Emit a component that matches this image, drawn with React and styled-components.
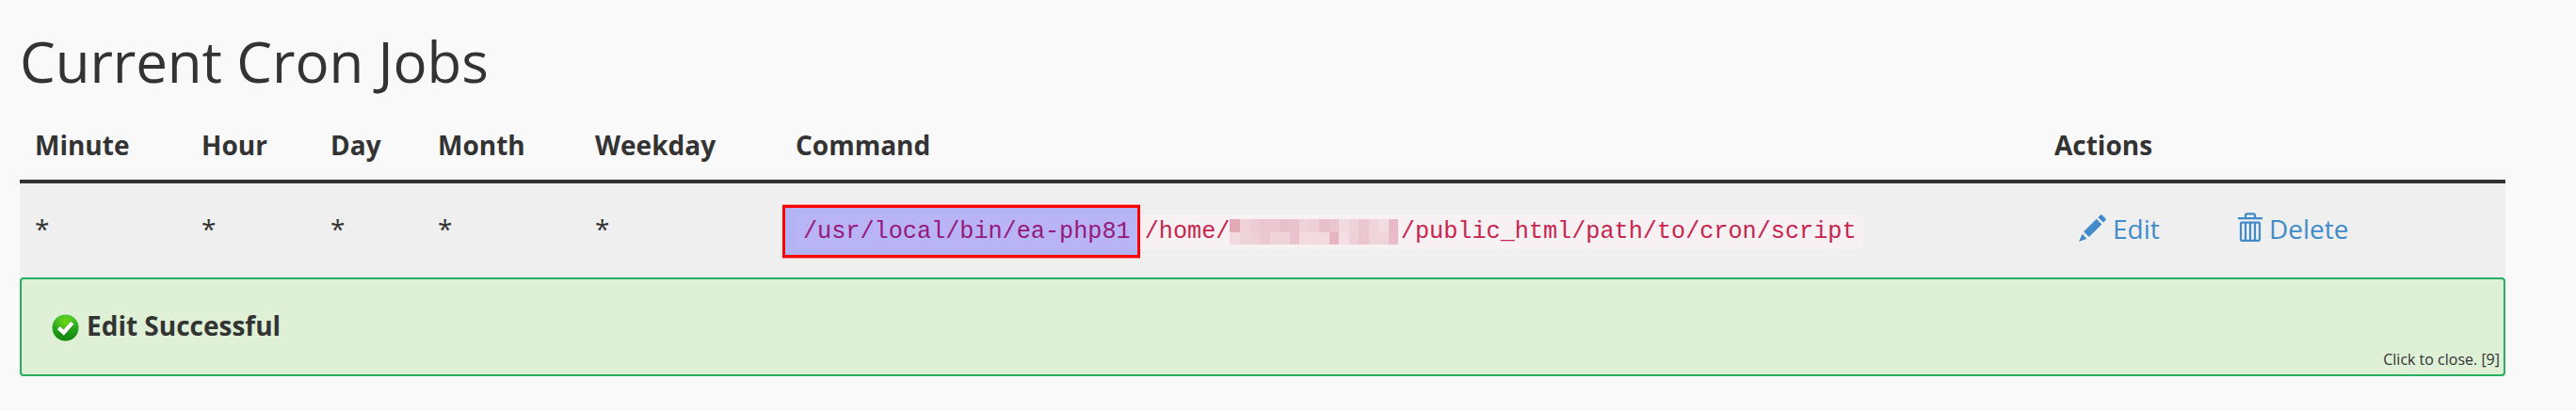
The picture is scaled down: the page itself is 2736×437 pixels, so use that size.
import React from "react";
import styled, { createGlobalStyle } from "styled-components";

const GlobalStyle = createGlobalStyle`
  body { margin: 0; background: #f9f9f9; }
  *, *::before, *::after { box-sizing: border-box; }
`;

const Page = styled.main`
  height: 437px;
  padding: 32px 75px 0 21px;
  background: #f9f9f9;
  color: #333;
  font: 28px/40px "Open Sans", sans-serif;
`;

const Title = styled.h2`
  margin: 0;
  font-size: 60px;
  line-height: 66px;
  font-weight: 400;
  letter-spacing: -0.1px;
`;

const columns = "177px 137px 114px 167px 213px 1337px 1fr";

const HeaderRow = styled.div`
  display: grid;
  grid-template-columns: ${columns};
  height: 97px;
  padding: 36px 0 0 16px;
  border-bottom: 4px solid #333;
  font-weight: 700;
`;

const JobRow = styled.div`
  display: grid;
  grid-template-columns: ${columns};
  height: 100px;
  padding: 28px 0 0 16px;
  background: #efefef;
`;

const Command = styled.div`
  position: relative;
  display: flex;
  align-items: flex-start;
  padding: 5px 0 0 0;
`;

const Code = styled.code`
  display: flex;
  align-items: center;
  height: 37px;
  padding: 0 8px;
  border-radius: 8px;
  background: #f7f1f3;
  color: #c7254e;
  font: 25.2px/29px "Liberation Mono", monospace;
  white-space: pre;
`;

const Highlight = styled.span`
  position: absolute;
  left: -14px;
  top: -5px;
  width: 380px;
  height: 56px;
  border: 3px solid #f00;
  background: rgba(0, 0, 255, 0.25);
  box-shadow: 0 1px rgba(255, 0, 0, 0.4), 0 -1px rgba(255, 0, 0, 0.3);
`;

const Mosaic = styled.span`
  display: grid;
  grid-template: 14px 13px / repeat(17, 1fr);
  width: 179px;
  margin-right: 2.4px;
`;

const Tile = styled.span`
  background: ${(p) => p.$color};
`;

const Actions = styled.div`
  display: flex;
  padding-left: 26px;
`;

const Action = styled.a`
  display: flex;
  align-items: flex-start;
  gap: 7px;
  width: ${(p) => p.$width};
  color: #428bca;
`;

const ActionIcon = styled.svg`
  flex: none;
  margin-top: ${(p) => p.$top};
`;

const Notice = styled.section`
  display: flex;
  justify-content: space-between;
  height: 105px;
  padding: 29px 4px 1px 32px;
  border: 2px solid #27ae60;
  border-radius: 4px;
  background: #def0d5;
`;

const Message = styled.div`
  display: flex;
  align-items: flex-start;
  gap: 8px;
  font-weight: 700;
`;

const StatusIcon = styled.svg`
  flex: none;
  margin-top: 8px;
`;

const CloseHint = styled.span`
  align-self: flex-end;
  font-size: 16px;
  line-height: 30px;
`;

const tiles = [
  "#e3a9b6 #eed1d9 #ecccd4 #eac6d0 #eac8d1 #e8c0cc #e8c3cd #eed2da #edcfd7 #e8c0cc #eac6d1 #f1dbe1 #eed3da #eac6d0 #f0d4db #f0dce1 #e8bac7",
  "#f1dbe1 #efd3da #eed0d8 #ebc8d2 #efd3da #efd3da #eac3ce #f2dbe1 #f1dbe0 #f2dae0 #e9b4c1 #f3dfe5 #eed0d8 #ebc5cf #efd3da #f1d3da #e8bccb",
].flatMap((row) => row.split(" "));

const headings = ["Minute", "Hour", "Day", "Month", "Weekday", "Command", "Actions"];

function Pencil() {
  return (
    <ActionIcon $top="5px" width="29" height="29" viewBox="0 0 29 29" fill="#428bca">
      <path d="M20.3 3.2 23 .6Q24 0 25 .9L28.3 4.2Q29.2 5.2 28.3 6.2L26 8.6Z" />
      <path d="M18.7 4.8 24.3 10.4 10.8 23.9 5.1 18.3Z" />
      <path d="M3.6 20.8 8.5 25.7 0 29Z" />
    </ActionIcon>
  );
}

function Trash() {
  return (
    <ActionIcon $top="3px" width="26" height="31" viewBox="0 0 26 31" fill="none" stroke="#428bca" strokeWidth="2.2">
      <path d="M0 6.2H26M8 5.5V3Q8 1.3 9.7 1.3H16.3Q18 1.3 18 3V5.5" />
      <rect x="3" y="10.6" width="20" height="19.2" rx="1" />
      <path d="M8 11V29M13 11V29M18 11V29" />
    </ActionIcon>
  );
}

function Success() {
  return (
    <StatusIcon width="29" height="29" viewBox="0 0 29 29">
      <defs>
        <linearGradient id="rim" x1="0" y1="0" x2="0" y2="1">
          <stop offset="0" stopColor="#4cc43a" />
          <stop offset=".5" stopColor="#27a51c" />
          <stop offset="1" stopColor="#12850d" />
        </linearGradient>
        <radialGradient id="glow" cx=".5" cy=".28" r=".45">
          <stop offset="0" stopColor="#6bd80f" />
          <stop offset="1" stopColor="#6bd80f" stopOpacity="0" />
        </radialGradient>
      </defs>
      <circle cx="14.5" cy="14.5" r="14" fill="url(#rim)" />
      <circle cx="14.5" cy="14.5" r="13" fill="url(#glow)" />
      <path d="M7.7 16.5 13 21.5 22.3 11.3" fill="none" stroke="#0b6b0b" strokeOpacity=".35" strokeWidth="4.5" />
      <path d="M7.3 14.7 12.7 19.7 21.7 9.3" fill="none" stroke="#fff" strokeWidth="4.3" />
    </StatusIcon>
  );
}

export default function App() {
  return (
    <Page>
      <GlobalStyle />
      <Title>Current Cron Jobs</Title>
      <HeaderRow>
        {headings.map((h) => <span key={h}>{h}</span>)}
      </HeaderRow>
      <JobRow>
        {headings.slice(0, 5).map((h) => <span key={h}>*</span>)}
        <Command>
          <Code>
            <span>/usr/local/bin/ea-php81 /home/</span>
            <Mosaic>{tiles.map((c, i) => <Tile key={i} $color={c} />)}</Mosaic>
            <span>/public_html/path/to/cron/script</span>
          </Code>
          <Highlight />
        </Command>
        <Actions>
          <Action $width="169px"><Pencil />Edit</Action>
          <Action $width="auto"><Trash />Delete</Action>
        </Actions>
      </JobRow>
      <Notice>
        <Message><Success />Edit Successful</Message>
        <CloseHint>Click to close. [9]</CloseHint>
      </Notice>
    </Page>
  );
}
